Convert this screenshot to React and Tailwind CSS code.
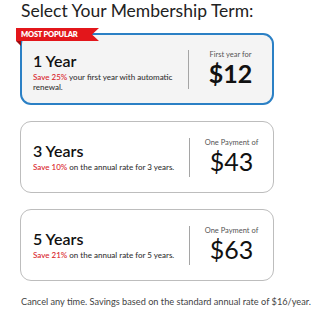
import React from "react";

const plans = [
  {
    term: "1 Year",
    save: "Save 25%",
    rest: " your first year with automatic renewal.",
    label: "First year for",
    price: "$12",
    popular: true,
  },
  {
    term: "3 Years",
    save: "Save 10%",
    rest: " on the annual rate for 3 years.",
    label: "One Payment of",
    price: "$43",
  },
  {
    term: "5 Years",
    save: "Save 21%",
    rest: " on the annual rate for 5 years.",
    label: "One Payment of",
    price: "$63",
  },
];

const Ribbon = () => (
  <div className="absolute left-[-6px] top-[-7px] w-[83px] h-[18px]">
    {/* red band with notched tail */}
    <svg className="absolute inset-0" width="83" height="18" viewBox="0 0 83 18">
      <polygon points="0,0 83,0 76,6.5 83,13 0,13" fill="#e3161b" />
      <polygon points="0,13 5,13 5,18" fill="#9b0d10" />
    </svg>
    <span className="absolute left-[5px] top-[2px] text-[7.5px] leading-[9px] font-extrabold tracking-[-0.2px] text-white uppercase">
      Most Popular
    </span>
  </div>
);

const App = () => {
  return (
    <div
      className="w-[320px] h-[318px] bg-white pl-[20px] pt-0 text-[#222]"
      style={{ fontFamily: "Lato, 'Open Sans', sans-serif" }}
    >
      <h1 className="text-[17.5px] leading-[21px] font-normal text-[#222] ml-[1px]">
        Select Your Membership Term:
      </h1>

      <div className="mt-[12px] flex flex-col gap-[16px] w-[254px]">
        {plans.map((p, index) => (
          <div
            key={index}
            className={`relative flex items-center h-[72px] rounded-[11px] ${
              p.popular
                ? "border-2 border-[#2b80c5] bg-[#f4f4f4]"
                : "border border-[#bdbdbd] bg-white h-[71px]"
            }`}
          >
            {p.popular && <Ribbon />}
            <div className={`flex-1 ${p.popular ? "pl-[11px] pt-[5px]" : "pl-[12px]"}`}>
              <div className="text-[16px] leading-[18px] font-semibold text-[#111]">
                {p.term}
              </div>
              <p className="mt-[2px] text-[8px] leading-[10px] font-medium text-[#333] pr-[8px]">
                <span className="text-[#d8232a]">{p.save}</span>
                {p.rest}
              </p>
            </div>
            <div className="w-px h-[39px] bg-[#a5a5a5]"></div>
            <div className="w-[83px] flex flex-col items-center pb-[1px]">
              <div className="text-[7.5px] leading-[10px] font-normal text-[#555]">
                {p.label}
              </div>
              <div
                className={`text-[25px] leading-[27px] text-[#111] ${
                  p.popular ? "font-bold" : "font-normal"
                }`}
              >
                {p.price}
              </div>
            </div>
          </div>
        ))}
      </div>

      <p className="mt-[15px] ml-[1px] text-[9.2px] leading-[11px] text-[#444] whitespace-nowrap">
        Cancel any time. Savings based on the standard annual rate of $16/year.
      </p>
    </div>
  );
};

export default App;
